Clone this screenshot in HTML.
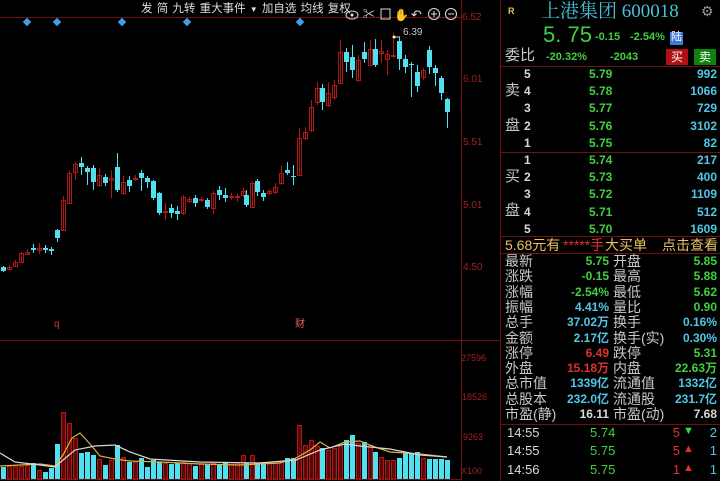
<!DOCTYPE html>
<html><head><meta charset="utf-8">
<style>
html,body{margin:0;padding:0;background:#000;width:720px;height:481px;overflow:hidden;font-family:"Liberation Sans","Noto Sans CJK SC",sans-serif;}
#wrap{position:relative;width:720px;height:481px;}
svg{position:absolute;left:0;top:0;}
.t{position:absolute;white-space:nowrap;line-height:1;}
.lbl{color:#c8c8c8;font-size:13px;}
.g{color:#3fd03f;}
.c{color:#4fc8e8;}
.r{color:#e03030;}
.y{color:#e8c060;}
.w{color:#d8d8d8;}
.num{font-size:12px;font-weight:bold;}
.b{font-weight:bold;}
</style></head><body><div id="wrap">
<svg id="chart" width="720" height="481" xmlns="http://www.w3.org/2000/svg"></svg>

<div class="t lbl" style="left:141px;top:4px;font-size:11.5px;color:#ddd;word-spacing:1px">发 简 九转 重大事件 <span style="font-size:8px">▼</span> 加自选 均线 复权</div>
<div class="t" style="left:462px;top:13px;font-size:10px;color:#a02020">6.52</div>
<div class="t" style="left:463px;top:75px;font-size:10px;color:#a02020">6.01</div>
<div class="t" style="left:463px;top:138px;font-size:10px;color:#a02020">5.51</div>
<div class="t" style="left:463px;top:201px;font-size:10px;color:#a02020">5.01</div>
<div class="t" style="left:463px;top:263px;font-size:10px;color:#a02020">4.50</div>
<div class="t" style="left:403px;top:28px;font-size:10px;color:#c8c8c8">6.39</div>
<div class="t" style="left:54px;top:320px;font-size:10px;color:#e03030">q</div>
<div class="t" style="left:295px;top:320px;font-size:10px;color:#f06060">财</div>
<div class="t" style="left:461px;top:354px;font-size:9px;color:#a02020">27596</div>
<div class="t" style="left:462px;top:393px;font-size:9px;color:#a02020">18526</div>
<div class="t" style="left:463px;top:433px;font-size:9px;color:#a02020">9263</div>
<div class="t" style="left:461px;top:467px;font-size:9px;color:#a02020">X100</div>

<div class="t y" style="left:508px;top:7px;font-size:9px;font-weight:bold">R</div>
<div class="t c" style="left:541px;top:2px;font-size:19px;font-family:'Liberation Serif','Noto Serif CJK SC',serif;color:#48c0d8">上港集团 600018</div>
<div class="t" style="left:701px;top:4px;font-size:14px;color:#999">⚙</div>
<div class="t g" style="left:543px;top:24px;font-size:22px;">5. 75</div>
<div class="t g b" style="left:595px;top:32px;font-size:11px;">-0.15</div>
<div class="t g b" style="left:630px;top:32px;font-size:11px;">-2.54%</div>
<div class="t" style="left:670px;top:32px;width:13px;height:13px;background:#3a7ad8;color:#fff;font-size:11px;text-align:center">陆</div>
<div class="t lbl" style="left:505px;top:48px;font-size:15px">委比</div>
<div class="t g b" style="left:546px;top:52px;font-size:11px">-20.32%</div>
<div class="t g b" style="left:610px;top:52px;font-size:11px">-2043</div>
<div class="t" style="left:666px;top:49px;width:22px;height:16px;background:#b01010;color:#fff;font-size:12px;text-align:center;line-height:16px">买</div>
<div class="t" style="left:694px;top:49px;width:22px;height:16px;background:#108010;color:#fff;font-size:12px;text-align:center;line-height:16px">卖</div>

<div id="book"></div>

<div class="t y" style="left:505px;top:238px;font-size:14px">5.68元有</div>
<div class="t r" style="left:563px;top:238px;font-size:14px">*****手</div>
<div class="t y" style="left:605px;top:238px;font-size:14px">大买单</div>
<div class="t y" style="left:662px;top:238px;font-size:14px">点击查看</div>
<div id="stats"></div>
<div id="trades"></div>

<script>
var S=document.getElementById('chart'),h='';
function L(x1,y1,x2,y2,c,w){h+='<line x1="'+x1+'" y1="'+y1+'" x2="'+x2+'" y2="'+y2+'" stroke="'+c+'" stroke-width="'+(w||1)+'"/>';}
L(0,17.5,461,17.5,'#701010');L(461.5,0,461.5,481,'#701010');L(500.5,0,500.5,481,'#701010');
L(0,340.5,500,340.5,'#701010');
L(500,66.5,720,66.5,'#701010');L(500,152.5,720,152.5,'#701010');L(500,236.5,720,236.5,'#701010');L(500,253.5,720,253.5,'#701010');L(500,424.5,720,424.5,'#701010');
L(0,479.5,461,479.5,'#701010');
[27,57,122,187,300].forEach(function(x){h+='<rect x="'+(x-3)+'" y="'+(19)+'" width="6" height="6" fill="#3aa0e8" transform="rotate(45 '+x+' 22)"/>';});
h+='<ellipse cx="352" cy="15" rx="6" ry="4" fill="none" stroke="#ddd"/><circle cx="352" cy="15" r="1.5" fill="#ddd"/>';
h+='<text x="363" y="18" fill="#ddd" font-size="12">✂</text>';
h+='<rect x="381" y="9" width="9" height="10" fill="none" stroke="#ddd"/>';
h+='<text x="394" y="19" fill="#ddd" font-size="12">✋</text>';
h+='<text x="411" y="19" fill="#ddd" font-size="13">↶</text>';
h+='<circle cx="434" cy="14" r="5.5" fill="none" stroke="#ddd"/><path d="M431 14h6M434 11v6" stroke="#ddd"/>';
h+='<circle cx="451" cy="14" r="5.5" fill="none" stroke="#ddd"/><path d="M448 14h6" stroke="#ddd"/>';
var C=[
[3,267,271,266,272,'c'],[9,269,267,265,270,'r'],[15,266,262,260,267,'r'],[21,262,253,252,263,'r'],[27,254,252,249,255,'r'],
[33,248,250,244,253,'c'],[39,250,248,243,254,'r'],[45,248,250,245,253,'c'],[51,249,251,247,255,'c'],[57,230,238,229,242,'c'],
[63,230,200,196,231,'r'],[69,203,173,171,204,'r'],[75,172,164,162,180,'r'],[81,163,167,157,175,'c'],[87,168,172,166,185,'c'],
[93,168,182,165,190,'c'],[99,185,175,168,187,'r'],[105,177,183,174,186,'c'],[111,180,178,170,198,'r'],[117,167,190,153,192,'c'],
[123,193,182,176,195,'r'],[129,180,186,176,192,'c'],[135,179,178,175,181,'r'],[141,173,178,170,191,'c'],[147,178,182,176,188,'c'],
[153,181,198,180,200,'c'],[159,193,213,192,215,'c'],[165,212,211,203,220,'r'],[171,208,213,204,218,'c'],[177,211,214,206,220,'c'],
[183,213,197,195,215,'r'],[189,201,199,197,203,'r'],[195,198,203,195,207,'c'],[201,200,199,197,202,'r'],[207,200,207,198,209,'c'],
[213,208,193,191,214,'r'],[219,190,195,186,200,'c'],[225,195,198,188,202,'c'],[231,197,196,193,200,'r'],[237,197,196,193,202,'r'],
[243,195,191,188,197,'r'],[246,195,205,190,207,'c'],[252,207,183,181,208,'r'],[257,181,192,179,196,'c'],[263,193,197,190,201,'c'],
[269,193,191,189,195,'r'],[275,192,187,183,194,'r'],[281,183,173,165,185,'r'],[287,170,173,162,175,'c'],[293,176,176,165,185,'c'],
[299,175,138,128,176,'r'],[305,138,132,127,140,'r'],[311,130,107,100,132,'r'],[317,102,88,82,105,'r'],[322,88,102,84,110,'c'],
[328,105,93,82,107,'r'],[334,97,85,80,100,'r'],[340,83,52,40,84,'r'],[346,52,62,48,72,'c'],[352,57,70,45,78,'c'],
[358,80,60,55,82,'r'],[364,52,59,42,63,'c'],[370,65,49,40,66,'r'],[375,49,65,39,67,'c'],[381,53,51,40,63,'r'],
[387,59,54,50,75,'r'],[393,56,55,33,58,'r'],[399,41,59,37,70,'c'],[405,59,67,55,73,'c'],[411,64,65,62,97,'c'],
[417,72,86,65,92,'c'],[423,77,70,68,80,'r'],[429,50,67,46,74,'c'],[435,68,73,65,86,'c'],[441,78,93,76,100,'c'],
[447,99,112,98,128,'c']];
var vol=[467,466,466,466,465,463,470,472,468,444,412,423,438,453,452,455,459,465,460,445,457,462,462,458,467,460,462,463,464,463,462,463,466,463,464,463,465,463,462,463,455,463,455,463,462,462,463,462,458,458,425,445,440,446,448,450,448,446,440,435,443,442,445,452,457,460,460,458,453,453,452,458,459,459,459,460];
C.forEach(function(k,i){
 var col=k[5]=='c'?'#50e0f0':'#b01818';
 var top=Math.min(k[1],k[2]),bh=Math.max(1,Math.abs(k[1]-k[2]));
 L(k[0]+0.5,k[3],k[0]+0.5,k[4],col);
 if(k[5]=='c')h+='<rect x="'+(k[0]-2)+'" y="'+top+'" width="5" height="'+bh+'" fill="'+col+'"/>';
 else h+='<rect x="'+(k[0]-1.5)+'" y="'+(top+0.5)+'" width="4" height="'+bh+'" fill="none" stroke="'+col+'"/>';
 var vt=vol[i]||462;
 if(k[5]=='c')h+='<rect x="'+(k[0]-2)+'" y="'+vt+'" width="5" height="'+(479-vt)+'" fill="'+col+'"/>';
 else h+='<rect x="'+(k[0]-1.5)+'" y="'+(vt+0.5)+'" width="4" height="'+(478.5-vt)+'" fill="#5a0808" stroke="'+col+'"/>';
});
h+='<path d="M393 37h7" stroke="#ddd"/><circle cx="394" cy="37" r="1.5" fill="#ff8"/>';
h+='<polyline fill="none" stroke="#e0b040" stroke-width="1.2" points="0,466 20,465 40,464 55,466 63,455 72,438 80,433 90,444 100,456 115,459 130,461 160,462 200,464 240,465 280,463 296,458 310,450 320,442 330,448 345,442 360,441 375,447 390,452 420,454 447,457"/>';
h+='<polyline fill="none" stroke="#d8d8d8" stroke-width="1.2" points="0,453 15,462 40,465 55,467 63,460 75,450 95,446 115,445 130,452 150,459 200,462 260,463 296,460 320,450 345,444 360,446 390,449 420,455 447,457"/>';
S.innerHTML=h;

function T(x,y,s,cls,fs,align,w){return '<div class="t '+cls+'" style="'+(align=='r'?'text-align:right;width:'+w+'px;':'')+'left:'+x+'px;top:'+y+'px;font-size:'+fs+'px">'+s+'</div>';}
var b='',asks=[['5','5.79','992'],['4','5.78','1066'],['3','5.77','729'],['2','5.76','3102'],['1','5.75','82']],
bids=[['1','5.74','217'],['2','5.73','400'],['3','5.72','1109'],['4','5.71','512'],['5','5.70','1609']];
asks.forEach(function(r,i){var y=68+i*17.2;b+=T(524,y,r[0],'w num',12)+T(589,y,r[1],'g num',12)+T(640,y,r[2],'c num',12,'r',77);});
bids.forEach(function(r,i){var y=154+i*17.2;b+=T(524,y,r[0],'w num',12)+T(589,y,r[1],'g num',12)+T(640,y,r[2],'c num',12,'r',77);});
b+=T(505,83,'卖','lbl',15)+T(505,118,'盘','lbl',15)+T(505,169,'买','lbl',15)+T(505,203,'盘','lbl',15);
document.getElementById('book').innerHTML=b;
var st=[['最新','5.75','g','开盘','5.85','g'],['涨跌','-0.15','g','最高','5.88','g'],['涨幅','-2.54%','g','最低','5.62','g'],['振幅','4.41%','c','量比','0.90','g'],
['总手','37.02万','c','换手','0.16%','c'],['金额','2.17亿','c','换手(实)','0.30%','c'],['涨停','6.49','r','跌停','5.31','g'],['外盘','15.18万','r','内盘','22.63万','g'],
['总市值','1339亿','c','流通值','1332亿','c'],['总股本','232.0亿','c','流通股','231.7亿','c'],['市盈(静)','16.11','w','市盈(动)','7.68','w']];
var s='';
st.forEach(function(r,i){var y=254+i*15.3;s+=T(505,y,r[0],'lbl',14)+T(540,y+1,r[1],r[2]+' b',12,'r',69)+T(613,y,r[3],'lbl',14)+T(640,y+1,r[4],r[5]+' b',12,'r',77);});
document.getElementById('stats').innerHTML=s;
var tr=[['14:55','5.74','5','g','2','▼'],['14:55','5.75','5','r','1','▲'],['14:56','5.75','1','r','1','▲']],q='';
tr.forEach(function(r,i){var y=426+i*18.3;q+=T(507,y,r[0],'w',13)+T(590,y,r[1],'g',13)+T(660,y,r[2],'r',13,'r',20)+T(683,y,r[5],r[3],11)+T(680,y,r[4],'c',13,'r',37);});
document.getElementById('trades').innerHTML=q;
</script>
</div></body></html>
